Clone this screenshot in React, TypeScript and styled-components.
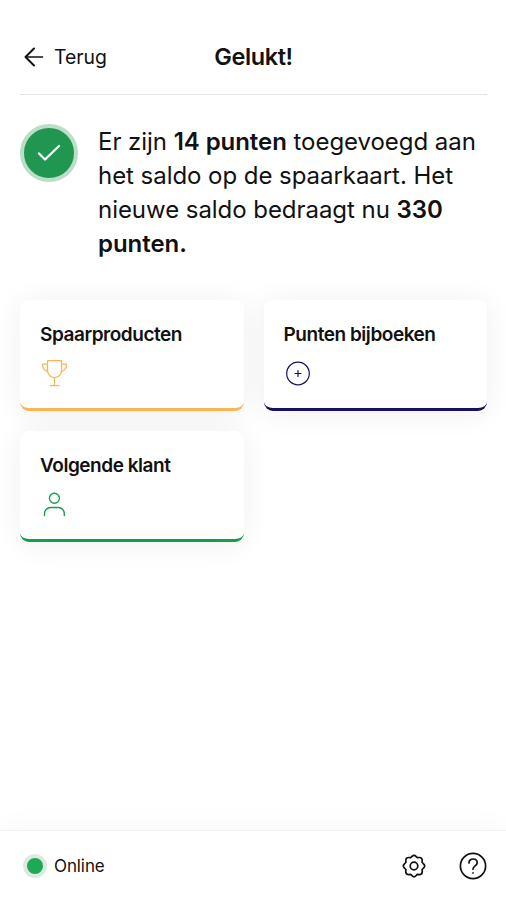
import React from "react";
import styled, { createGlobalStyle } from "styled-components";

const GlobalStyle = createGlobalStyle`
  * { box-sizing: border-box; }
  body { margin: 0; background: #fff; }
  button { font: inherit; color: inherit; background: none; border: 0; padding: 0; letter-spacing: inherit; text-align: left; }
  svg { display: block; flex: none; overflow: visible; }
`;

const Screen = styled.div`
  width: 100%;
  height: 900px;
  display: flex;
  flex-direction: column;
  overflow: hidden;
  background: #fff;
  color: #111;
  font-family: Inter, "Liberation Sans", sans-serif;
`;

const Header = styled.header`
  display: grid;
  grid-template-columns: 1fr auto 1fr;
  align-items: center;
  height: 95px;
  margin: 0 19px 0 20px;
  padding-top: 19px;
  border-bottom: 1px solid #e4e4e4;
`;

const BackButton = styled.button`
  display: flex;
  align-items: center;
  gap: 10px;
  padding-left: 4px;
  font-size: 19.4px;
  line-height: 24px;
`;

const Title = styled.h1`
  margin: 0;
  font-size: 23.5px;
  line-height: 28px;
  font-weight: 600;
  letter-spacing: -0.4px;
`;

const Main = styled.main`
  flex: 1;
  padding: 29px 19px 0 20px;
`;

const Notice = styled.section`
  display: flex;
  gap: 20px;
  height: 176px;
`;

const SuccessBadge = styled.div`
  display: flex;
  align-items: center;
  justify-content: center;
  flex: none;
  width: 58px;
  height: 58px;
  border: 4px solid #bbdec8;
  border-radius: 50%;
  background: #209650;
`;

const Message = styled.p`
  margin: 0;
  padding-top: 1px;
  width: 389px;
  font-size: 24px;
  font-weight: 400;
  line-height: 34.1px;
  letter-spacing: -0.05px;
  strong { font-weight: 600; }
`;

const CardGrid = styled.div`
  display: grid;
  grid-template-columns: 1fr 1fr;
  gap: 20px;
`;

const Card = styled.button<{ $accent: string }>`
  display: flex;
  flex-direction: column;
  align-items: flex-start;
  gap: 11px;
  height: 111px;
  padding: 22px 20px 0;
  border-bottom: 3px solid ${(p) => p.$accent};
  border-radius: 9px;
  background: #fff;
  box-shadow: 0 2px 30px rgba(0, 0, 0, 0.065);
  color: ${(p) => p.$accent};
`;

const CardTitle = styled.span`
  color: #111;
  font-size: 19px;
  font-weight: 600;
  line-height: 25px;
  letter-spacing: -0.46px;
  white-space: nowrap;
`;

const Footer = styled.footer`
  display: flex;
  align-items: center;
  justify-content: space-between;
  height: 70px;
  padding: 0 19.5px 0 23px;
  border-top: 1px solid #f1f1f1;
  background: #fff;
  box-shadow: 0 -2px 30px rgba(0, 0, 0, 0.035);
`;

const Status = styled.div`
  display: flex;
  align-items: center;
  gap: 7px;
  font-size: 17px;
  line-height: 24px;
  letter-spacing: -0.1px;
`;

const StatusDot = styled.span`
  width: 24px;
  height: 24px;
  border: 4px solid #dcebe1;
  border-radius: 50%;
  background: #1fa857;
`;

const FooterActions = styled.div`
  display: flex;
  align-items: center;
  gap: 33px;
`;

const line = {
  fill: "none",
  stroke: "currentColor",
  strokeLinecap: "round" as const,
  strokeLinejoin: "round" as const,
};

const ArrowIcon = () => (
  <svg width="20" height="20" viewBox="0 0 20 20" {...line} strokeWidth="2">
    <path d="M10 1.5 1.5 10 10 18.5" />
    <path d="M2 10h16.5" strokeWidth="1.6" />
  </svg>
);

const CheckIcon = () => (
  <svg width="24" height="18" viewBox="0 0 24 18" {...line} strokeWidth="2.3" color="#fff">
    <path d="m2 9.5 6 6L22 2" />
  </svg>
);

const TrophyIcon = () => (
  <svg width="28" height="30" viewBox="0 0 28 30" {...line} strokeWidth="1.25">
    <path d="M7.500 2.500h14v9.500c0 4-3 7-7 8-4-1-7-4-7-8zM14.500 20v7M10 27.500h9" />
    <path d="M7.500 6H2.500c0 3.500 1.500 6.500 5 7.500M21.500 6h5c0 3.500-1.500 6.500-5 7.500" />
  </svg>
);

const PlusIcon = () => (
  <svg width="28" height="30" viewBox="0 0 28 30" {...line} strokeWidth="1.2">
    <circle cx="14" cy="15.500" r="11.300" />
    <path d="M14 12.500v6M11 15.500h6" />
  </svg>
);

const PersonIcon = () => (
  <svg width="28" height="30" viewBox="0 0 28 30" {...line} strokeWidth="1.350">
    <circle cx="14.400" cy="9.200" r="5" />
    <path d="M4.500 26.500v-2a6 6 0 0 1 6-6h7.800a6 6 0 0 1 6 6v2" />
  </svg>
);

const GearIcon = () => (
  <svg width="24" height="24" viewBox="0 0 24 24" {...line} strokeWidth="1.700">
    <circle cx="12" cy="12" r="3.800" />
    <path d="M10 2.400q2-2.200 4 0l1.300 1.300 1.800-.2q3-.2 3.100 2.900l-.1 1.900 1.500 1.700q2.200 2 0 4l-1.500 1.500.2 2q0 3-3.100 3.100l-1.900-.2-1.300 1.300q-2 2.200-4 0l-1.300-1.300-1.900.2q-3 0-3.100-3.100l.2-2-1.500-1.500q-2.200-2 0-4l1.500-1.700-.1-1.900q0-3 3.100-2.900l1.800.2z" />
  </svg>
);

const HelpIcon = () => (
  <svg width="28" height="28" viewBox="0 0 28 28" {...line} strokeWidth="1.700">
    <circle cx="14" cy="14" r="12.600" />
    <path d="M10 11c0-2.400 1.700-4 4.100-4s4.100 1.500 4.100 3.700c0 3.300-4.200 3.100-4.200 6.500M14 20.800v.2" />
  </svg>
);

const actions = [
  { label: "Spaarproducten", accent: "#f9b551", Icon: TrophyIcon },
  { label: "Punten bijboeken", accent: "#17125f", Icon: PlusIcon },
  { label: "Volgende klant", accent: "#119f49", Icon: PersonIcon },
];

export default function App() {
  return (
    <Screen>
      <GlobalStyle />
      <Header>
        <BackButton>
          <ArrowIcon />
          Terug
        </BackButton>
        <Title>Gelukt!</Title>
      </Header>
      <Main>
        <Notice>
          <SuccessBadge>
            <CheckIcon />
          </SuccessBadge>
          <Message>
            Er zijn <strong>14 punten</strong> toegevoegd aan het saldo op de spaarkaart. Het nieuwe saldo
            bedraagt nu <strong>330 punten.</strong>
          </Message>
        </Notice>
        <CardGrid>
          {actions.map(({ label, accent, Icon }) => (
            <Card key={label} $accent={accent}>
              <CardTitle>{label}</CardTitle>
              <Icon />
            </Card>
          ))}
        </CardGrid>
      </Main>
      <Footer>
        <Status>
          <StatusDot />
          Online
        </Status>
        <FooterActions>
          <button aria-label="Instellingen">
            <GearIcon />
          </button>
          <button aria-label="Help">
            <HelpIcon />
          </button>
        </FooterActions>
      </Footer>
    </Screen>
  );
}
